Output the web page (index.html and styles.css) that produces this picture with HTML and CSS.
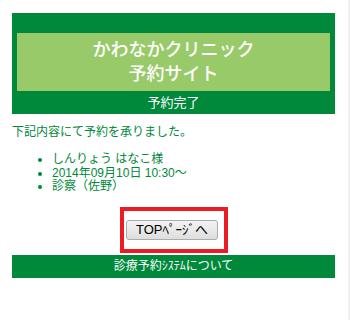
FILE: index.html
```html
<!DOCTYPE html>
<html lang="ja">
<head>
<meta charset="utf-8">
<title>予約完了</title>
<link rel="stylesheet" href="styles.css">
</head>
<body>
<div class="page">
  <div class="header">
    <h1 class="title">かわなかクリニック<br>予約サイト</h1>
    <div class="status">予約完了</div>
  </div>
  <p class="message">下記内容にて予約を承りました。</p>
  <ul class="details">
    <li>しんりょう はなこ様</li>
    <li>2014年09月10日 10:30～</li>
    <li>診察（佐野）</li>
  </ul>
  <div class="actions">
    <div class="highlight"><button class="top-btn" type="button">TOPﾍﾟｰｼﾞへ</button></div>
  </div>
  <div class="footer">診療予約ｼｽﾃﾑについて</div>
</div>
</body>
</html>
```
FILE: styles.css
```css
html {
  background: linear-gradient(to right, #ffffff 348px, #f0f0f0 348px);
  min-height: 100%;
}
body {
  margin: 0;
  padding: 13px 0 0 12px;
  font-family: "Liberation Sans", "Noto Sans CJK JP", sans-serif;
  font-size: 12px;
  color: #00893a;
}
.page {
  width: 323px;
}
.header {
  background: #00893a;
  padding: 20px 5px 0 5px;
}
.title {
  margin: 0;
  background: #99ca6a;
  color: #ffffff;
  font-size: 18px;
  font-weight: 500;
  line-height: 24px;
  text-align: center;
  padding: 5px 0;
  height: 48px;
}
.status {
  height: 23px;
  line-height: 23px;
  text-align: center;
  color: #ffffff;
  font-size: 13px;
}
.message {
  margin: 10px 0 0 0;
  line-height: 16px;
}
.details {
  margin: 13px 0 0 0;
  padding-left: 40px;
  line-height: 13.5px;
}
.actions {
  display: flex;
  justify-content: center;
  margin-top: 13px;
}
.highlight {
  border: 4px solid #ec1c24;
  padding: 9px 6px 9px 2px;
  display: flex;
  margin-left: 1px;
}
.top-btn {
  width: 92px;
  height: 20px;
  padding: 0;
  font-family: "Liberation Sans", "Noto Sans CJK JP", sans-serif;
  font-size: 13px;
  font-weight: normal;
  line-height: 18px;
  color: #000000;
  background: linear-gradient(#f3f3f3, #dedede);
  border: 1px solid #acacac;
  border-radius: 3px;
}
.footer {
  margin-top: 2px;
  background: #00893a;
  color: #ffffff;
  height: 23px;
  line-height: 23px;
  text-align: center;
  font-size: 12px;
}
```
